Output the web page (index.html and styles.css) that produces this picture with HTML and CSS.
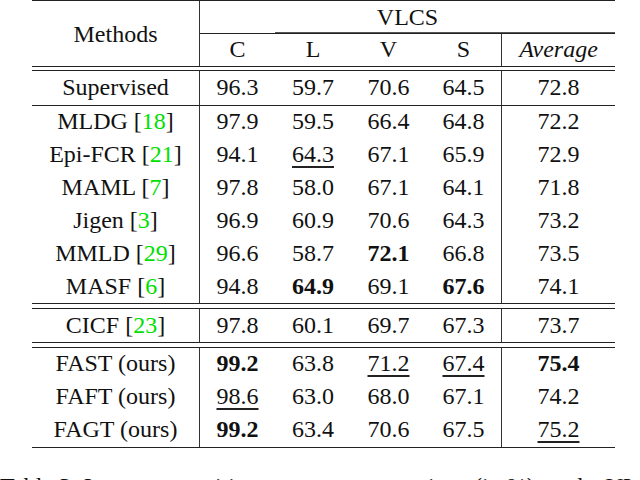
FILE: index.html
```html
<!DOCTYPE html>
<html>
<head>
<meta charset="utf-8">
<link rel="stylesheet" href="styles.css">
</head>
<body>
<div class="tbl">
  <div class="rule"></div>
  <div class="head">
    <div class="cell methods vr">Methods</div>
    <div class="cell vlcs">VLCS</div>
    <div class="cmid"><span class="cmid-thick"></span></div>
    <div class="cell">C</div>
    <div class="cell">L</div>
    <div class="cell">V</div>
    <div class="cell vr">S</div>
    <div class="cell"><i>Average</i></div>
  </div>
  <div class="dbl d5"></div>
  <div class="sec sec-sup">
    <div class="cell vr">Supervised</div><div class="cell">96.3</div><div class="cell">59.7</div><div class="cell">70.6</div><div class="cell vr">64.5</div><div class="cell">72.8</div>
  </div>
  <div class="rule"></div>
  <div class="sec sec-six">
    <div class="cell vr">MLDG [<span class="cite">18</span>]</div><div class="cell">97.9</div><div class="cell">59.5</div><div class="cell">66.4</div><div class="cell vr">64.8</div><div class="cell">72.2</div>
    <div class="cell vr">Epi-FCR [<span class="cite">21</span>]</div><div class="cell">94.1</div><div class="cell"><u>64.3</u></div><div class="cell">67.1</div><div class="cell vr">65.9</div><div class="cell">72.9</div>
    <div class="cell vr">MAML [<span class="cite">7</span>]</div><div class="cell">97.8</div><div class="cell">58.0</div><div class="cell">67.1</div><div class="cell vr">64.1</div><div class="cell">71.8</div>
    <div class="cell vr">Jigen [<span class="cite">3</span>]</div><div class="cell">96.9</div><div class="cell">60.9</div><div class="cell">70.6</div><div class="cell vr">64.3</div><div class="cell">73.2</div>
    <div class="cell vr">MMLD [<span class="cite">29</span>]</div><div class="cell">96.6</div><div class="cell">58.7</div><div class="cell"><b>72.1</b></div><div class="cell vr">66.8</div><div class="cell">73.5</div>
    <div class="cell vr">MASF [<span class="cite">6</span>]</div><div class="cell">94.8</div><div class="cell"><b>64.9</b></div><div class="cell">69.1</div><div class="cell vr"><b>67.6</b></div><div class="cell">74.1</div>
  </div>
  <div class="dbl d6"></div>
  <div class="sec sec-one">
    <div class="cell vr">CICF [<span class="cite">23</span>]</div><div class="cell">97.8</div><div class="cell">60.1</div><div class="cell">69.7</div><div class="cell vr">67.3</div><div class="cell">73.7</div>
  </div>
  <div class="dbl d6"></div>
  <div class="sec sec-three">
    <div class="cell vr">FAST (ours)</div><div class="cell"><b>99.2</b></div><div class="cell">63.8</div><div class="cell"><u>71.2</u></div><div class="cell vr"><u>67.4</u></div><div class="cell"><b>75.4</b></div>
    <div class="cell vr">FAFT (ours)</div><div class="cell"><u>98.6</u></div><div class="cell">63.0</div><div class="cell">68.0</div><div class="cell vr">67.1</div><div class="cell">74.2</div>
    <div class="cell vr">FAGT (ours)</div><div class="cell"><b>99.2</b></div><div class="cell">63.4</div><div class="cell">70.6</div><div class="cell vr">67.5</div><div class="cell"><u>75.2</u></div>
  </div>
  <div class="rule"></div>
</div>
<p class="caption">Table 3: Image recognition accuracy comparison (in %) on the VLCS benchmark.</p>
</body>
</html>
```

FILE: styles.css
```css
html, body {
  margin: 0;
  padding: 0;
  background: #fff;
}
body {
  font-family: "Liberation Serif", "Times New Roman", Times, serif;
  font-size: 24px;
  color: #111;
  width: 640px;
  height: 480px;
  overflow: hidden;
}
.tbl {
  margin-left: 32px;
  width: 583px;
}
.rule {
  height: 1px;
  background: #222;
}
.dbl {
  border-top: 1px solid #222;
  border-bottom: 1px solid #222;
  box-sizing: border-box;
}
.d5 { height: 5px; }
.d6 { height: 6px; }

.head, .sec {
  display: grid;
  grid-template-columns: 168px 75px 76px 75px 76px 113px;
}
.head {
  grid-template-rows: 32px 1px 32px;
}
.cell {
  display: flex;
  align-items: center;
  justify-content: center;
  white-space: nowrap;
  line-height: 26px;
  padding-bottom: 2px;
  box-sizing: border-box;
}
.vr { border-right: 1px solid #333; }
.methods {
  grid-row: 1 / 4;
  grid-column: 1;
  padding-bottom: 0;
}
.vlcs {
  grid-row: 1;
  grid-column: 2 / 7;
  padding-bottom: 0;
}
.cmid {
  grid-row: 2;
  grid-column: 2 / 7;
  background: #222;
  position: relative;
}
.cmid-thick {
  position: absolute;
  left: 75px;
  right: 0;
  top: -1px;
  height: 1px;
  background: #555;
}
.sec-sup { grid-auto-rows: 34px; }
.sec-six { grid-template-rows: 33px 33px 33px 33px 33px 32px; }
.sec-six .cell { padding-bottom: 3px; }
.sec-one { grid-auto-rows: 33px; }
.sec-three { grid-auto-rows: 33px; }
.sec-three .cell { padding-bottom: 3px; }

.cite { color: #00e000; }
u {
  text-decoration: underline;
  text-decoration-thickness: 1.5px;
  text-underline-offset: 4px;
  text-decoration-color: #222;
}
b { font-weight: bold; }
.caption {
  margin: 24px 0 0 0;
  white-space: nowrap;
  font-size: 24px;
  line-height: 28px;
}
```
